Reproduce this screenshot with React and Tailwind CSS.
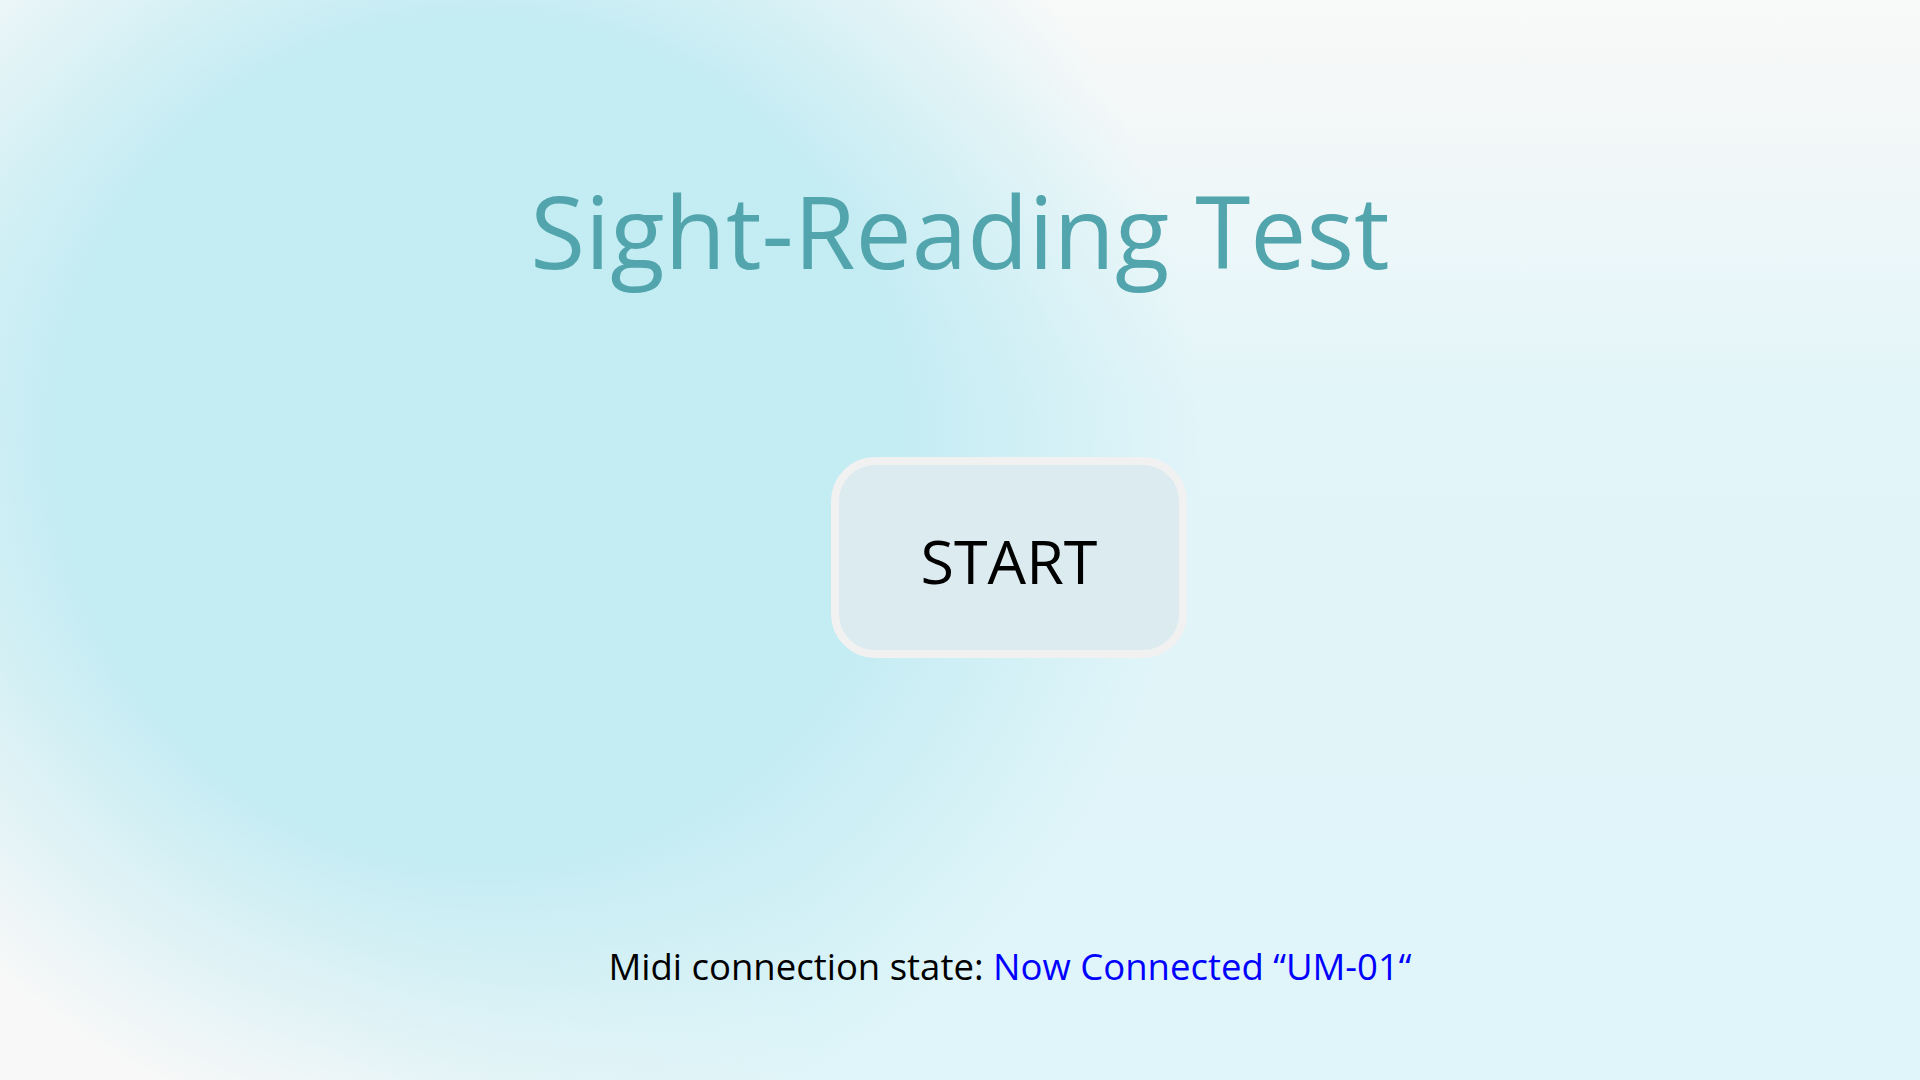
import React from "react";

// soft cyan blob over a light cyan base, white along the top and in the bottom-left corner
const bg =
  "bg-[radial-gradient(circle_at_480px_440px,#c4ecf3_0px,#c4ecf3_420px,rgba(196,236,243,0)_720px),radial-gradient(circle_at_0%_100%,#f8f8f8_0px,#f8f8f8_330px,rgba(248,248,248,0)_820px),linear-gradient(to_bottom,#f8f9f9_0px,#f5f8f8_90px,#e2f5f9_400px,#dff5f9_100%)]";

export default function App() {
  return (
    <div className={`w-full h-screen ${bg} font-['Open_Sans',sans-serif] flex flex-col items-center overflow-hidden`}>
      {/* Title */}
      <h1 className="mt-[180px] text-[100px] leading-none text-[#52a5ad]">
        Sight-Reading Test
      </h1>

      {/* Start button */}
      <button className="mt-[177px] ml-[98px] w-[356px] h-[201px] rounded-[44px] border-[8px] border-[#f1f1f1] bg-[#dcebf0] text-black text-[61px] leading-none pt-[5px] flex items-center justify-center">
        START
      </button>

      {/* Midi status */}
      <p className="mt-[290px] ml-[100px] text-[36.5px] leading-none text-black">
        Midi connection state: <span className="text-[#0000ff]">Now Connected “UM-01“</span>
      </p>
    </div>
  );
}
